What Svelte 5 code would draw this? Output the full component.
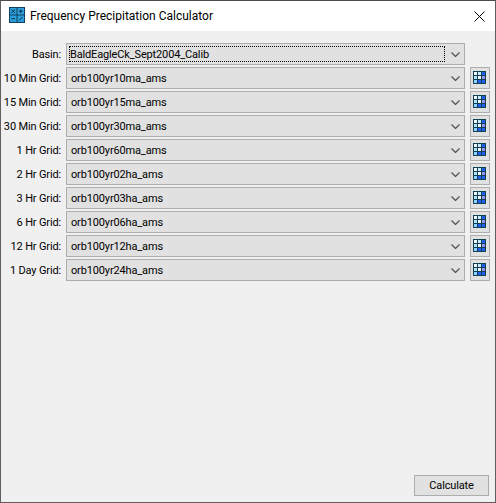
<script>
	let rows = [
		['10 Min Grid:', 'orb100yr10ma_ams'],
		['15 Min Grid:', 'orb100yr15ma_ams'],
		['30 Min Grid:', 'orb100yr30ma_ams'],
		['1 Hr Grid:', 'orb100yr60ma_ams'],
		['2 Hr Grid:', 'orb100yr02ha_ams'],
		['3 Hr Grid:', 'orb100yr03ha_ams'],
		['6 Hr Grid:', 'orb100yr06ha_ams'],
		['12 Hr Grid:', 'orb100yr12ha_ams'],
		['1 Day Grid:', 'orb100yr24ha_ams']
	]
	// colours of the little table icon, left to right
	let cells = ['#f2fbff', '#c4ebff', '#1f62f5', '#b0e2ff', '#f2fbff', '#9a8ff5', '#8fd0ff', '#1f62f5', '#1f62f5']
</script>

<div class="window">
	<header class="titlebar">
		<svg class="appicon" width="16" height="16" viewBox="0 0 16 16">
			<rect width="16" height="16" fill="#123f5c" />
			<rect x="1" y="1" width="6.5" height="6.5" fill="#2a9fdc" />
			<rect x="8.5" y="1" width="6.5" height="6.5" fill="#2a9fdc" />
			<rect x="1" y="8.5" width="6.5" height="6.5" fill="#2a9fdc" />
			<rect x="8.5" y="8.5" width="6.5" height="6.5" fill="#2a9fdc" />
			<path d="M2.5 2.5l3.5 3.5M6 2.5l-3.5 3.5M10 4.2h3.5M11.75 2.5v3.5M2.5 11.7h3.5M10 13.5l3.5-3.5" stroke="#0d2f47" fill="none" />
		</svg>
		<span class="title">Frequency Precipitation Calculator</span>
		<svg class="close" width="11" height="11" viewBox="0 0 11 11">
			<path d="M.5.5l10 10M10.5.5l-10 10" stroke="#000" fill="none" />
		</svg>
	</header>

	<main class="content">
		<div class="form">
			<div class="row">
				<span class="label">Basin:</span>
				<div class="combo">
					<span class="focus">BaldEagleCk_Sept2004_Calib</span>
					<svg class="chev" width="9" height="5" viewBox="0 0 9 5"><path d="M.5.5l4 4 4-4" stroke="#505050" stroke-width="1.2" fill="none" /></svg>
				</div>
				<span class="spacer"></span>
			</div>
			{#each rows as [label, value]}
				<div class="row">
					<span class="label">{label}</span>
					<div class="combo">
						<span class="value">{value}</span>
						<svg class="chev" width="9" height="5" viewBox="0 0 9 5"><path d="M.5.5l4 4 4-4" stroke="#505050" stroke-width="1.2" fill="none" /></svg>
					</div>
					<button class="gridbtn" aria-label="Select grid">
						<span class="table">
							{#each cells as c}
								<i style="background:{c}"></i>
							{/each}
						</span>
					</button>
				</div>
			{/each}
		</div>
		<div class="footer">
			<button class="calc">Calculate</button>
		</div>
	</main>
</div>

<style>
	:global(body) {
		margin: 0;
	}
	.window {
		box-sizing: border-box;
		width: 496px;
		height: 503px;
		display: flex;
		flex-direction: column;
		border: 1px solid #5f5f5f;
		border-top-color: #4c4c4c;
		background: #f0f0f0;
		font-family: Roboto, "Open Sans", sans-serif;
		font-size: 11px;
		letter-spacing: -0.15px;
		color: #000;
	}
	.titlebar {
		height: 30px;
		flex: none;
		display: flex;
		align-items: center;
		padding: 0 10px 0 8px;
		background: #fff;
	}
	.appicon {
		margin-top: -2px;
	}
	.title {
		margin-left: 5px;
		font-size: 12px;
		letter-spacing: 0;
		flex: 1;
	}
	.content {
		flex: 1;
		display: flex;
		flex-direction: column;
		justify-content: space-between;
		padding: 12px 6px 6px 0;
	}
	.form {
		display: flex;
		flex-direction: column;
		gap: 2px;
	}
	.row {
		display: flex;
		align-items: center;
		height: 22px;
	}
	.label {
		width: 60px;
		text-align: right;
		margin-right: 5px;
		flex: none;
		white-space: nowrap;
	}
	.combo {
		box-sizing: border-box;
		width: 399px;
		height: 22px;
		flex: none;
		display: flex;
		align-items: center;
		justify-content: space-between;
		padding: 0 3px 0 2px;
		background: #e1e1e1;
		border: 1px solid #adadad;
	}
	.focus {
		flex: 1;
		margin-right: 6px;
		height: 16px;
		line-height: 15px;
		box-sizing: border-box;
		border: 1px dotted #000;
	}
	.value {
		padding-left: 2px;
	}
	.chev {
		margin-right: 1px;
	}
	.spacer {
		width: 25px;
	}
	.gridbtn {
		box-sizing: border-box;
		width: 20px;
		height: 22px;
		margin-left: 5px;
		padding: 0 0 1px;
		flex: none;
		display: flex;
		align-items: center;
		justify-content: center;
		background: #e1e1e1;
		border: 1px solid #adadad;
	}
	.table {
		display: grid;
		grid-template-columns: repeat(3, 3px);
		grid-auto-rows: 3px;
		gap: 1px;
		padding: 1px;
		margin-left: -1px;
		background: #0f3f4f;
	}
	.table i {
		display: block;
	}
	.footer {
		display: flex;
		justify-content: flex-end;
	}
	.calc {
		box-sizing: border-box;
		width: 75px;
		height: 21px;
		padding: 0;
		background: #e1e1e1;
		border: 1px solid #adadad;
		font: inherit;
		letter-spacing: inherit;
		color: #000;
	}
</style>
